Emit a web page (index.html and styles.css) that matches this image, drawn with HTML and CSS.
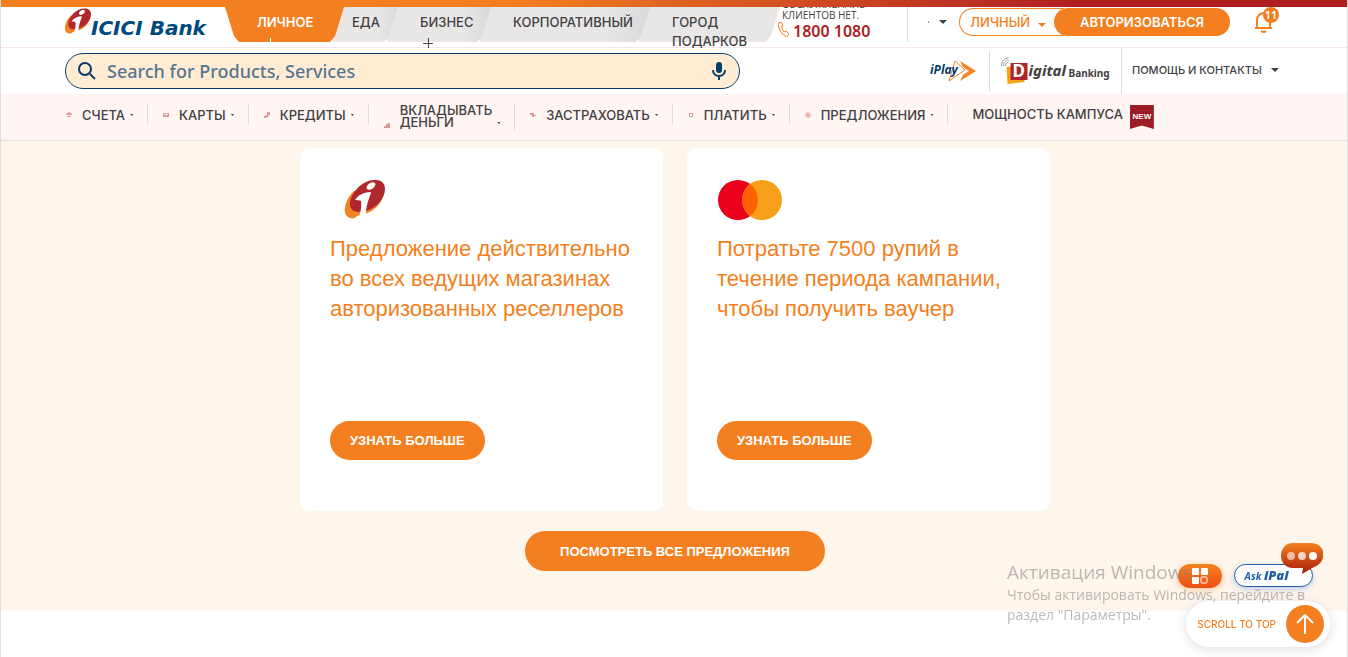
FILE: index.html
```
<!DOCTYPE html>
<html lang="ru">

<head>
    <meta charset="UTF-8">
    <meta name="viewport" content="width=device-width, initial-scale=1.0">
    <title>ICICI Bank</title>
    <link rel="stylesheet" href="styles.css">
</head>

<body>
    <!-- shared shapes -->
    <svg class="sprite" aria-hidden="true">
        <symbol id="imark" viewBox="0 0 40 40">
            <path fill="#f58220" d="M9 11C1 18-1 28 0 33c2 6 9 7 12 3l8-2c10-3 18-12 19-22Z" />
            <path fill="#ae282e" d="M31 0C19-1 7 11 5 22c-1 6 3 10 8 10l8-1c11-3 19-13 19-22C40 3 36 0 31 0Z" />
            <path fill="#fff" d="M10 20c3-5 9-8 16-8-1 5-5 12-5 22l-1 4-8 3c3-6 5-13 4-20-2-1-4-1-6-1Z" />
            <ellipse cx="26" cy="6" rx="5" ry="3" transform="rotate(-35 26 6)" fill="#fff" />
        </symbol>
    </svg>

    <header class="header">
        <div class="strip"></div>

        <div class="row top">
            <a class="logo" href="#">
                <svg class="logo-mark"><use href="#imark" /></svg>
                <span class="logo-name">ICICI Bank</span>
            </a>
            <ul class="tabs">
                <li class="tab active"><a href="#">ЛИЧНОЕ</a><i class="plus"></i></li>
                <li class="tab food"><a href="#">ЕДА</a></li>
                <li class="tab business"><a href="#">БИЗНЕС</a><i class="plus"></i></li>
                <li class="tab corporate"><a href="#">КОРПОРАТИВНЫЙ</a></li>
                <li class="tab gift"><a href="#">ГОРОД ПОДАРКОВ</a></li>
            </ul>
            <div class="care">
                <span class="care-title">ОБСЛУЖИВАНИЕ КЛИЕНТОВ НЕТ.</span>
                <svg class="phone" viewBox="0 0 12 16"><path d="M3 1 1 2c-2 3 2 11 6 13 2 1 3 0 4-2L8 10 6 11C5 10 4 8 3 6l2-1Z" /></svg>
                <a class="care-number" href="tel:18001080">1800 1080</a>
            </div>
            <button class="lang" aria-label="Язык"><i class="dot"></i><i class="caret"></i></button>
            <div class="login">
                <button class="login-type">ЛИЧНЫЙ <i class="caret"></i></button>
                <button class="login-go">АВТОРИЗОВАТЬСЯ</button>
            </div>
            <button class="bell" aria-label="Уведомления">
                <svg viewBox="0 0 20 22"><path d="M1 19h17M3 19V11c0-4 3-7 7-7s6 3 6 7v8M7 22q3 2 5 0" /></svg>
                <span class="count">11</span>
            </button>
        </div>

        <div class="row middle">
            <form class="search">
                <svg class="glass" viewBox="0 0 18 18"><circle cx="7" cy="7" r="6" /><path d="m12 12 5 5" /></svg>
                <input type="text" aria-label="Search" placeholder="Search for Products, Services">
                <svg class="mic" viewBox="0 0 14 18"><rect x="4" y="0" width="6" height="11" rx="3" /><path d="M1 8c0 8 12 8 12 0M7 14v4" /></svg>
            </form>
            <a class="iplay" href="#" aria-label="iPlay">
                <svg viewBox="0 0 46 22">
                    <path fill="#f58220" d="m30 1 16 10-16 10 3-6 6-4-6-4Z" />
                    <path fill="none" stroke="#f58220" d="m25 1 10 9-16 11Z" />
                    <text x="0" y="14">iPlay</text>
                </svg>
            </a>
            <a class="digital" href="#" aria-label="Digital Banking">
                <svg viewBox="0 0 110 28">
                    <path fill="none" stroke="#999" d="M1 9c0-5 3-8 7-8M3 9c0-4 2-5 5-6M5 9c0-2 1-3 3-4" />
                    <path fill="#f9a11b" d="m6 10 18-2v17l-17 2Z" />
                    <path fill="#b0252b" d="M10 6h17v17H10Z" />
                    <text class="big-d" x="12" y="20">D</text>
                    <text class="igital" x="28" y="19">igital</text>
                    <text class="banking" x="68" y="20">Banking</text>
                </svg>
            </a>
            <a class="help" href="#">ПОМОЩЬ И КОНТАКТЫ <i class="caret"></i></a>
        </div>

        <nav class="row menu">
            <a class="item" href="#"><svg viewBox="0 0 6 6"><path d="M0 2 3 0l3 2v1H0ZM1 4h4v1H1Z" /></svg>СЧЕТА<i class="tick"></i></a>
            <a class="item" href="#"><svg viewBox="0 0 6 6"><path d="M0 1h6v4H0ZM1 2v1h4V2Z" /></svg>КАРТЫ<i class="tick"></i></a>
            <a class="item" href="#"><svg viewBox="0 0 6 6"><path d="M3 0h3v3H4l1 2H3L2 6H0V4l3-1Z" /></svg>КРЕДИТЫ<i class="tick"></i></a>
            <a class="item invest" href="#"><svg viewBox="0 0 6 6"><path d="M0 4h2v2H0ZM2 2h2v4H2ZM4 1h2v5H4Z" /></svg><span>ВКЛАДЫВАТЬ<br>ДЕНЬГИ</span><i class="tick"></i></a>
            <a class="item" href="#"><svg viewBox="0 0 6 6"><path d="M0 1h4v2h2v1H4v1H2V3H0Z" /></svg>ЗАСТРАХОВАТЬ<i class="tick"></i></a>
            <a class="item" href="#"><svg viewBox="0 0 6 6"><path d="M1 1h4v4H1ZM2 2v2h2V2Z" /></svg>ПЛАТИТЬ<i class="tick"></i></a>
            <a class="item" href="#"><svg viewBox="0 0 8 8"><circle class="ring" cx="4" cy="4" r="3" /><path class="ring" d="m2 2 4 4M3 5l2-2" /></svg>ПРЕДЛОЖЕНИЯ<i class="tick"></i></a>
            <a class="campus" href="#">МОЩНОСТЬ КАМПУСА <span class="new">NEW</span></a>
        </nav>
    </header>

    <main class="offers">
        <div class="cards">
            <article class="card">
                <svg class="card-logo icici"><use href="#imark" /></svg>
                <h2>Предложение действительно во всех ведущих магазинах авторизованных реселлеров</h2>
                <button class="btn">УЗНАТЬ БОЛЬШЕ</button>
            </article>
            <article class="card">
                <svg class="card-logo" viewBox="0 0 66 40">
                    <circle cx="21" cy="20" r="20" fill="#eb001b" />
                    <circle cx="45" cy="20" r="20" fill="#f79e1b" />
                    <path fill="#ff5f00" d="M33 4a20 20 0 0 1 0 32 20 20 0 0 1 0-32Z" />
                </svg>
                <h2>Потратьте 7500 рупий в течение периода кампании, чтобы получить ваучер</h2>
                <button class="btn">УЗНАТЬ БОЛЬШЕ</button>
            </article>
        </div>
        <button class="btn all">ПОСМОТРЕТЬ ВСЕ ПРЕДЛОЖЕНИЯ</button>
    </main>

    <div class="widgets">
        <div class="chats">
            <button class="apps" aria-label="Приложения">
                <svg viewBox="0 0 16 16">
                    <rect width="7" height="7" rx="1" /><rect x="9" width="7" height="7" rx="1" />
                    <rect y="9" width="7" height="7" rx="1" /><rect class="hollow" x="9" y="9" width="6" height="6" rx="1" />
                </svg>
            </button>
            <button class="ipal">
                <span>Ask</span> <b>iPal</b>
                <svg class="bubble" viewBox="0 0 42 32">
                    <defs>
                        <linearGradient id="fire" x2="0" y2="1">
                            <stop stop-color="#f58220" />
                            <stop offset="1" stop-color="#a5180b" />
                        </linearGradient>
                    </defs>
                    <path fill="url(#fire)" d="M12 0h18c16 0 16 20 3 24L21 31l1-6H12C-4 25-4 0 12 0Z" />
                    <circle cx="10" cy="13" r="4" opacity=".6" /><circle cx="21" cy="13" r="4" opacity=".75" /><circle cx="32" cy="13" r="4" />
                </svg>
            </button>
        </div>
        <button class="scroll">SCROLL TO TOP
            <span class="up"><svg viewBox="0 0 18 20"><path d="M9 20V1M1 9l8-8 8 8" /></svg></span>
        </button>
    </div>

    <div class="activation">
        <p class="activation-title">Активация Windows</p>
        <p>Чтобы активировать Windows, перейдите в раздел "Параметры".</p>
    </div>
</body>

</html>
```
FILE: styles.css
```
* {
    box-sizing: border-box;
}

body {
    margin: 0;
    min-height: 100vh;
    border-left: 1px solid #ddd;
    border-right: 1px solid #ddd;
    background-color: #fff;
    color: #414042;
    font-family: "Liberation Sans", Arial, sans-serif;
}

a {
    color: inherit;
    text-decoration: none;
}

button {
    padding: 0;
    border: 0;
    background: none;
    color: inherit;
    font-family: inherit;
    cursor: pointer;
}

.sprite {
    display: none;
}

.caret {
    display: inline-block;
    border: 4px solid transparent;
    border-top-color: currentColor;
    border-bottom: 0;
}

/* header */

.header {
    border-bottom: 1px solid #ddd;
    background-color: #fff;
}

.strip {
    position: relative;
    z-index: 5;
    height: 7px;
    background: linear-gradient(to right, #f47f20 38%, #ad1e23 80%);
}

.row {
    display: flex;
    padding-left: 64px;
}

.top {
    height: 41px;
    border-bottom: 1px solid #f7e6e9;
}

.logo {
    display: flex;
    width: 160px;
    color: #004a80;
}

.logo-mark {
    width: 26px;
    height: 27px;
    margin-top: 1px;
}

.logo-name {
    margin-top: 9px;
    font: italic bold 20px "DejaVu Sans", sans-serif;
    white-space: nowrap;
}

.tabs {
    display: flex;
    margin: 0;
    padding: 0;
    list-style: none;
    font-family: Inter, sans-serif;
    font-size: 13px;
    font-weight: 500;
    line-height: 19px;
}

.tab {
    position: relative;
    height: 35px;
    margin-left: -14px;
    padding: 6px 0 0 36px;
}

.tab::before {
    content: "";
    position: absolute;
    inset: 0;
    background: linear-gradient(to right, #e9e6e6 75%, #dad8d8);
    clip-path: polygon(0 0, 100% 0, calc(100% - 9px) 29px, calc(100% - 14px) 100%, 14px 100%, 9px 29px);
}

.tab a {
    position: relative;
}

.tab.active {
    z-index: 4;
    width: 119px;
    margin-left: 0;
    padding-left: 32px;
    color: #fff;
    font-weight: 600;
}

.tab.active::before {
    background: #f47f20;
}

/* grey tabs run under the one on their left */
.food,
.business,
.corporate,
.gift {
    margin-left: -24px;
}

.food {
    z-index: 3;
    width: 78px;
    padding-left: 32px;
}

.business {
    z-index: 2;
    width: 117px;
    padding-left: 46px;
}

.corporate {
    z-index: 1;
    width: 183px;
    padding-left: 46px;
}

.gift {
    width: 154px;
    padding: 6px 30px 0 46px;
}

.gift::before {
    background: #e9e6e6;
}

.plus {
    position: absolute;
    left: 40px;
    top: 31px;
    width: 10px;
    height: 10px;
    background: linear-gradient(currentColor, currentColor) center / 10px 1px no-repeat, linear-gradient(currentColor, currentColor) center / 1px 10px no-repeat;
}

.business .plus {
    left: 49px;
}

.care {
    display: grid;
    grid-template-columns: 12px 1fr;
    column-gap: 3px;
    align-content: start;
    width: 130px;
    height: 43px;
    margin: -8px 0 0 -2px;
    border-right: 1px solid #ddd;
}

.care-title {
    grid-column: 1 / 3;
    width: 100px;
    padding-left: 4px;
    font-family: "Open Sans", sans-serif;
    font-size: 10px;
    line-height: 11px;
}

.phone {
    width: 12px;
    height: 16px;
    fill: none;
    stroke: #f47f20;
}

.care-number {
    color: #ad1e23;
    font: 600 16px/20px "Noto Sans", sans-serif;
}

.lang {
    display: flex;
    align-items: center;
    gap: 10px;
    height: 30px;
    margin-left: 20px;
}

.dot {
    width: 1px;
    height: 2px;
    background-color: #999;
}

.login {
    display: flex;
    height: 28px;
    margin: 1px 24px 0 12px;
}

.login-type {
    width: 105px;
    padding-right: 8px;
    border: 1px solid #f47f20;
    border-right: 0;
    border-radius: 14px 0 0 14px;
    color: #f47f20;
    font: 500 13px Inter, sans-serif;
}

.login-type .caret {
    margin-left: 4px;
}

.login-go {
    width: 176px;
    margin-left: -10px;
    border-radius: 14px;
    background-color: #f47f20;
    color: #fff;
    font: 600 13px Inter, sans-serif;
}

.bell {
    position: relative;
    width: 20px;
    height: 28px;
}

.bell svg {
    width: 20px;
    height: 24px;
    fill: none;
    stroke: #f47f20;
    stroke-width: 2;
    overflow: visible;
}

.count {
    position: absolute;
    left: 9px;
    top: 0;
    width: 16px;
    height: 16px;
    border-radius: 8px;
    background-color: #f47f20;
    color: #fff;
    font: 600 11px/16px "Noto Sans", sans-serif;
}

.middle {
    align-items: center;
    height: 46px;
}

.search {
    display: flex;
    align-items: center;
    width: 675px;
    height: 36px;
    padding: 0 13px 0 12px;
    border: 1px solid #053c6d;
    border-radius: 18px;
    background-color: #ffecd2;
}

.search svg {
    fill: none;
    stroke: #053c6d;
    stroke-width: 2;
}

.search .glass {
    width: 18px;
    height: 18px;
}

.search .mic {
    width: 14px;
    height: 18px;
}

.search .mic rect {
    fill: #053c6d;
    stroke: none;
}

.search input {
    flex: 1;
    padding: 0 11px;
    border: 0;
    outline: 0;
    background: none;
    font: 500 18px/24px "Noto Sans", sans-serif;
}

.search input::placeholder {
    color: #557592;
    opacity: 1;
}

.iplay {
    display: flex;
    margin-left: 190px;
    padding-right: 13px;
}

.iplay svg {
    width: 46px;
    height: 22px;
    fill: #053c6d;
    font: italic bold 12px "Noto Sans", sans-serif;
}

.digital {
    display: flex;
    align-items: center;
    height: 40px;
    padding: 0 10px;
    border-left: 1px solid #ddd;
}

.digital svg {
    width: 111px;
    height: 28px;
}

.big-d {
    fill: #fff;
    font: bold 17px "Noto Sans", sans-serif;
}

.igital {
    fill: #414042;
    font: italic bold 15px "Noto Sans", sans-serif;
}

.banking {
    fill: #414042;
    font: bold 10px "Noto Sans", sans-serif;
}

.help {
    height: 46px;
    padding-left: 10px;
    border-left: 1px solid #ddd;
    font: 500 11px/44px Inter, sans-serif;
}

.help .caret {
    margin: 0 0 2px 6px;
}

.menu {
    align-items: flex-start;
    min-height: 46px;
    padding-top: 10px;
    background-color: #fff5f3;
    font: 500 13px Inter, sans-serif;
}

.item {
    display: grid;
    grid-template-columns: auto auto auto;
    align-items: center;
    height: 20px;
    padding: 2px 14px 0 15px;
    border-right: 1px solid #ddd;
    column-gap: 5px;
}

.item:first-child {
    padding-left: 1px;
}

.item svg {
    width: 6px;
    height: 6px;
    margin-right: 5px;
    fill: #d99;
}

.item .ring {
    fill: none;
    stroke: #d77;
}

.tick {
    width: 3px;
    height: 2px;
    background-color: #414042;
    clip-path: polygon(0 0, 100% 0, 70% 100%);
}

.invest {
    align-items: end;
    height: 26px;
    padding: 0 14px 2px 15px;
    line-height: 12px;
}

.invest .tick {
    margin-bottom: 4px;
}

.campus {
    display: flex;
    gap: 7px;
    padding-left: 24px;
    line-height: 20px;
}

.new {
    width: 24px;
    height: 24px;
    margin-top: 1px;
    background-color: #9d1d27;
    color: #fff;
    clip-path: polygon(0 0, 100% 0, 100% 100%, 50% 85%, 0 100%);
    font: bold 8px/24px "Liberation Sans", sans-serif;
    text-align: center;
}

/* offers */

.offers {
    padding: 7px 20px 40px 22px;
    background-color: #fff6eb;
    text-align: center;
}

.cards {
    display: grid;
    grid-template-columns: 1fr 1fr;
    gap: 24px;
    max-width: 750px;
    margin: 0 auto 20px;
    text-align: left;
}

.card {
    display: flex;
    flex-direction: column;
    align-items: flex-start;
    min-height: 363px;
    padding: 32px 30px 51px;
    border-radius: 10px;
    background-color: #fff;
}

.card-logo {
    width: 66px;
    height: 40px;
}

.icici {
    width: 70px;
}

.card h2 {
    margin: 14px 0 auto;
    color: #f47f20;
    font-size: 22px;
    font-weight: normal;
    line-height: 30px;
}

.btn {
    height: 39px;
    padding: 0 20px;
    border-radius: 20px;
    background-color: #f47f20;
    color: #fff;
    font-size: 13px;
    font-weight: bold;
}

.all {
    height: 40px;
    padding: 0 35px;
}

/* floating widgets over the page */

.widgets {
    position: fixed;
    right: 18px;
    bottom: 10px;
    display: flex;
    flex-direction: column;
    align-items: flex-end;
    gap: 13px;
}

.chats {
    display: flex;
    gap: 12px;
    padding-right: 17px;
}

.apps {
    width: 44px;
    height: 24px;
    border-radius: 12px;
    background: linear-gradient(#f58220, #f04e14);
    box-shadow: 0 2px 8px #f9c9a0;
}

.apps svg {
    display: block;
    width: 16px;
    height: 16px;
    margin: auto;
    fill: #fff;
}

.apps .hollow {
    fill: none;
    stroke: #fff;
}

.ipal {
    position: relative;
    width: 79px;
    height: 23px;
    padding-right: 14px;
    border: 1px solid #1f5fa8;
    border-radius: 12px;
    background-color: #fff;
    box-shadow: 0 2px 6px #bcd;
    color: #1f5fa8;
    font: italic bold 10px "Noto Sans", sans-serif;
    white-space: nowrap;
}

.ipal b {
    font-size: 13px;
    line-height: 14px;
}

.bubble {
    position: absolute;
    right: -11px;
    top: -22px;
    width: 42px;
    height: 32px;
    fill: #fff;
}

.scroll {
    display: flex;
    align-items: center;
    gap: 10px;
    height: 46px;
    padding: 0 6px 0 11px;
    border-radius: 23px;
    background-color: #fff;
    box-shadow: 0 2px 12px #ddd;
    color: #f47f20;
    font: 500 10px Inter, sans-serif;
}

.up {
    display: flex;
    align-items: center;
    justify-content: center;
    width: 38px;
    height: 38px;
    border-radius: 19px;
    background-color: #f47f20;
}

.up svg {
    width: 18px;
    height: 20px;
    fill: none;
    stroke: #fff;
    stroke-width: 2;
}

.activation {
    position: fixed;
    right: 21px;
    bottom: 32px;
    width: 320px;
    color: rgba(130, 130, 130, 0.55);
    font: 14px/20px "Open Sans", sans-serif;
    pointer-events: none;
}

.activation p {
    margin: 0;
}

.activation .activation-title {
    font-size: 19px;
    line-height: 25px;
}
```
